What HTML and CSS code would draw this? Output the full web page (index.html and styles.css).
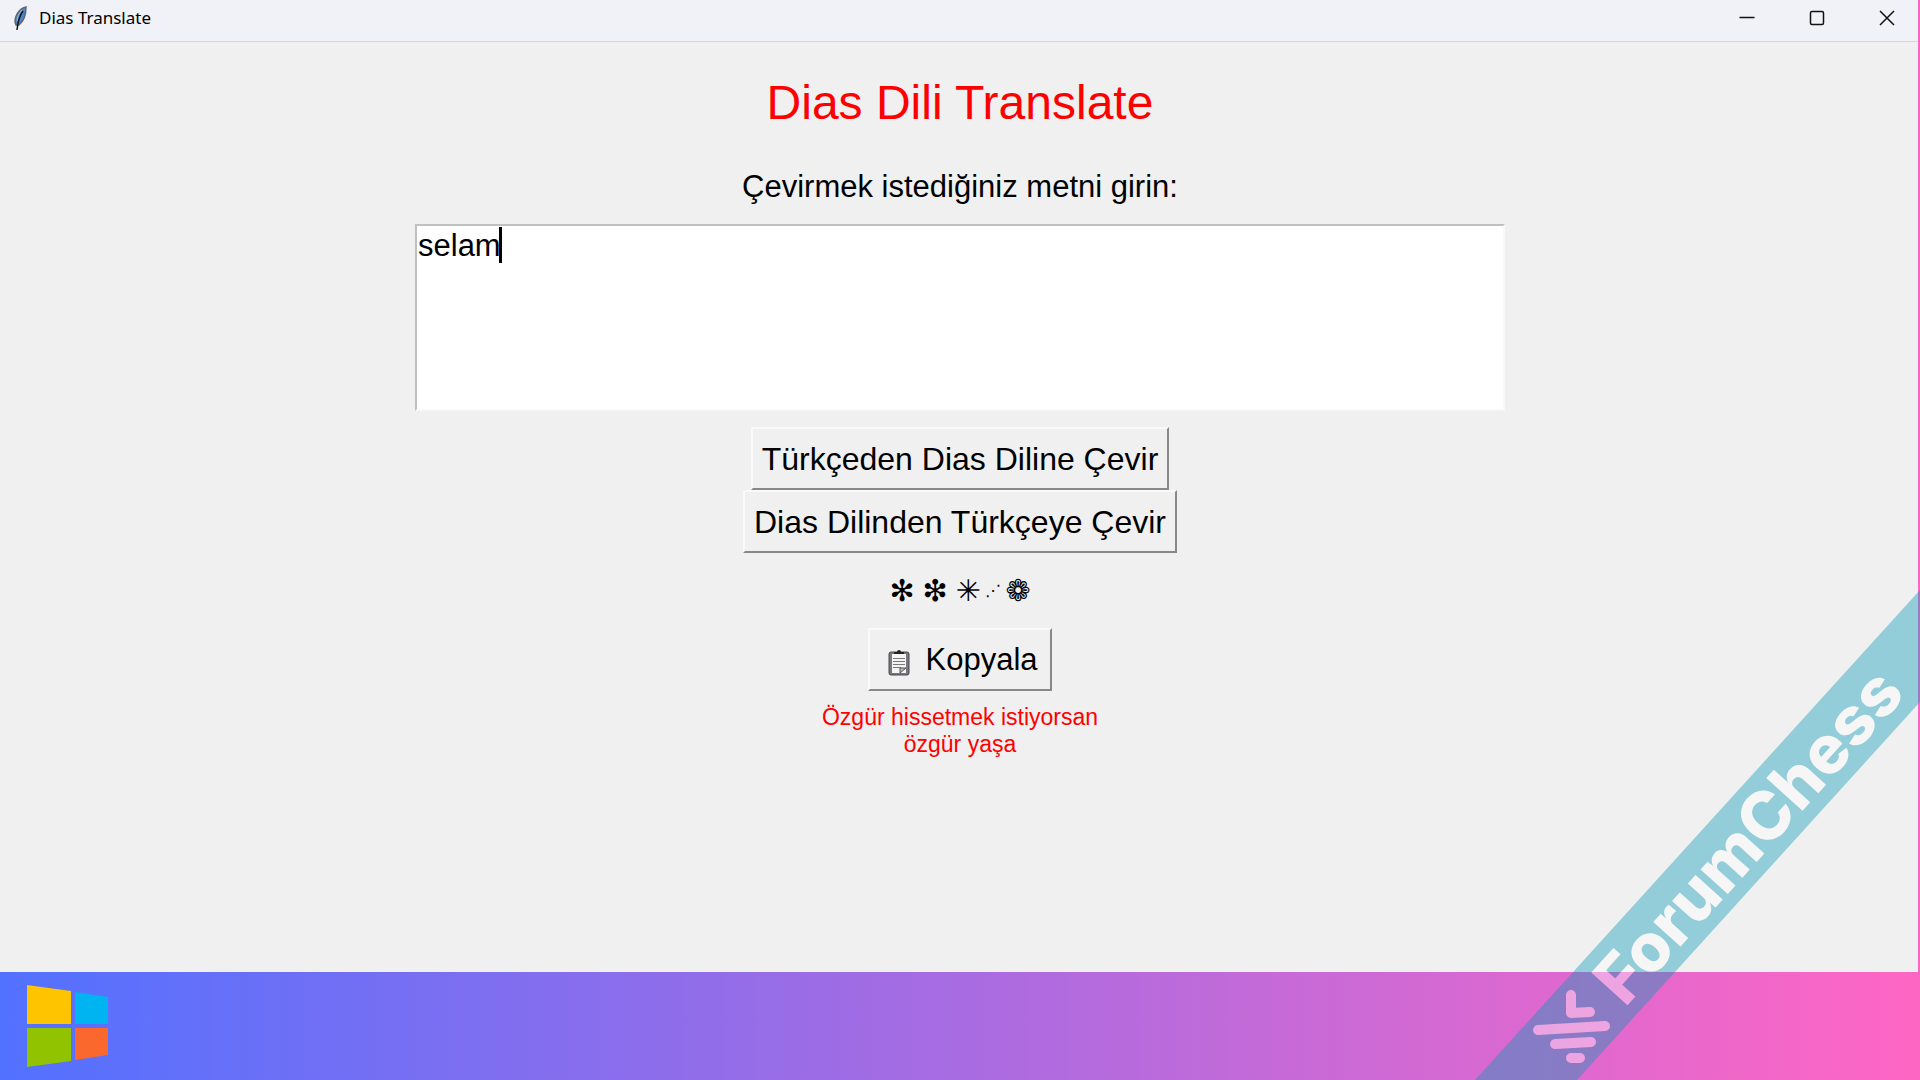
FILE: index.html
```html
<!DOCTYPE html>
<html lang="tr">
<head>
<meta charset="utf-8">
<title>Dias Translate</title>
<link rel="stylesheet" href="styles.css">
</head>
<body>
<div class="window">
  <header class="titlebar">
    <svg class="feather" width="16" height="28" viewBox="0 0 16 28" aria-hidden="true">
      <path d="M14 3C8 4 3 11 3 18l1 3 3 0C12 17 14 10 14 3Z" fill="#4a86c8" stroke="#66666a" stroke-width="1.500"/>
      <path d="M11 7C8 11 6 16 5 26" fill="none" stroke="#15151a" stroke-width="1.500"/>
      <path d="M10 6C7 9 5 13 5 17" fill="none" stroke="#8fc0ea" stroke-width="1"/>
    </svg>
    <span class="caption">Dias Translate</span>
    <div class="controls">
      <button class="control" type="button" aria-label="Simge durumuna küçült"><svg width="16" height="16" viewBox="0 0 16 16"><path d="M.5 7.500h15"/></svg></button>
      <button class="control" type="button" aria-label="Ekranı kapla"><svg width="16" height="16" viewBox="0 0 16 16"><rect x="1.500" y="1.500" width="13" height="13" rx="1.500"/></svg></button>
      <button class="control" type="button" aria-label="Kapat"><svg width="16" height="16" viewBox="0 0 16 16"><path d="M1 1l14 14M15 1L1 15"/></svg></button>
    </div>
  </header>
  <main class="content">
    <h1 class="title">Dias Dili Translate</h1>
    <label class="prompt" for="source">Çevirmek istediğiniz metni girin:</label>
    <div class="field">
      <textarea class="source" id="source" spellcheck="false">selam</textarea>
      <span class="caret"></span>
    </div>
    <button class="button" type="button">Türkçeden Dias Diline Çevir</button>
    <button class="button" type="button">Dias Dilinden Türkçeye Çevir</button>
    <output class="result" for="source"><span class="sign wide">✻</span><span class="sign wide">❇</span><span class="sign">✳</span><span class="sign dots">⋰</span><span class="sign">❁</span></output>
    <button class="button copy" type="button">
      <svg class="clipboard" width="22" height="26" viewBox="0 0 22 26" aria-hidden="true">
        <rect x="1" y="2" width="20" height="23" rx="2" fill="#77777c" stroke="#4b4b50" stroke-width="1"/>
        <rect x="4" y="4" width="14" height="19" fill="#f4f4f4"/>
        <path d="M6 4V2h3a2 2 0 0 1 4 0h3v2Z" fill="#222"/>
        <path d="M5 8.500h12M5 11.500h12M5 14.500h12M5 17.500h8" stroke="#77777c"/>
        <path d="M12 23v-5h6Z" fill="#bbb" stroke="#555"/>
      </svg>
      Kopyala
    </button>
    <p class="motto">Özgür hissetmek istiyorsan<br>özgür yaşa</p>
  </main>
</div>
<footer class="taskbar">
  <svg class="start" width="82" height="82" viewBox="0 0 82 82" role="img" aria-label="Windows">
    <path d="M0 0l44 6v33H0Z" fill="#ffc400"/>
    <path d="M48 7l33 5v27H48Z" fill="#00b4f2"/>
    <path d="M0 43h44v33L0 82Z" fill="#91c300"/>
    <path d="M48 43h33v27l-33 5Z" fill="#fa682d"/>
  </svg>
</footer>
<svg class="ribbon" width="460" height="500" viewBox="0 0 460 500" role="img" aria-label="ForumChess">
  <path d="M15 500L460 10v112L117 500Z" fill="#069ab6"/>
  <g fill="none" stroke="#fff" stroke-width="10" stroke-linecap="round" stroke-linejoin="round">
    <path d="M111 415v18l19-1M78 450l67-4M95 464l36-2M111 478h9"/>
  </g>
  <text class="brand" transform="translate(165 428) rotate(-48)">ForumChess</text>
</svg>
</body>
</html>
```
FILE: styles.css
```css
* { box-sizing: border-box; }
body {
  margin: 0;
  min-height: 100vh;
  display: flex;
  flex-direction: column;
  background: linear-gradient(90deg, #5271ff, #ff66c4);
  font-family: "Liberation Sans", Arial, sans-serif;
  color: #000;
}
.window {
  flex: 1;
  display: flex;
  flex-direction: column;
  margin-right: 2px;
  background: #f0f0f0;
}
.titlebar {
  display: flex;
  align-items: center;
  height: 42px;
  padding: 0 13px 6px 12px;
  border-bottom: 1px solid #d6d7da;
  background: #f0f2f8;
}
.caption {
  margin-left: 11px;
  font-family: "Noto Sans", sans-serif;
  font-size: 17px;
  line-height: 24px;
}
.controls { display: flex; gap: 38px; margin-left: auto; padding-right: 2px; }
.control {
  display: grid;
  place-items: center;
  width: 32px;
  height: 32px;
  padding: 0;
  border: 0;
  background: none;
}
.control svg { fill: none; stroke: #111; stroke-width: 1.500; }
.content {
  display: flex;
  flex-direction: column;
  align-items: center;
  padding: 33px 0 0 2px;
}
.title {
  margin: 0 0 38px;
  font-size: 48px;
  font-weight: 400;
  line-height: 56px;
  color: #f00;
}
.prompt { font-size: 31px; line-height: 36px; }
.field { position: relative; width: 90%; max-width: 1090px; margin: 19px 0 16px; }
.source {
  display: block;
  width: 100%;
  height: 187px;
  padding: 2px 1px;
  border: 2px solid;
  border-color: #c0c0c0 #f8f8f8 #f8f8f8 #c0c0c0;
  outline: 0;
  background: #fff;
  font-family: inherit;
  font-size: 31px;
  line-height: 36px;
  resize: none;
}
.caret {
  position: absolute;
  top: 3px;
  left: 84px;
  width: 3px;
  height: 36px;
  background: #000;
}
.button {
  height: 63px;
  padding: 0 9px;
  border: 2px solid;
  border-color: #fafafa #888 #888 #fafafa;
  background: #f0f0f0;
  color: #000;
  font-family: inherit;
  font-size: 32px;
  line-height: 36px;
}
.result {
  display: flex;
  margin: 20px 0 19px;
  font-family: "DejaVu Sans", sans-serif;
  font-size: 30px;
  line-height: 36px;
}
.sign { display: flex; justify-content: center; width: 25px; }
.wide { margin-right: 8px; }
.dots { font-size: 16px; }
.copy {
  display: flex;
  align-items: center;
  gap: 15px;
  padding: 0 12px 0 18px;
  font-size: 31px;
}
.clipboard { margin-top: 6px; }
.motto {
  margin: 13px 0 0;
  font-size: 23px;
  line-height: 27px;
  text-align: center;
  color: #f00;
}
.taskbar { height: 108px; padding: 13px 27px; }
.start { display: block; }
.ribbon { position: fixed; right: 0; bottom: 0; opacity: .4; }
.brand {
  font-family: Inter, sans-serif;
  font-size: 67px;
  font-weight: 800;
  fill: #fff;
}
```
